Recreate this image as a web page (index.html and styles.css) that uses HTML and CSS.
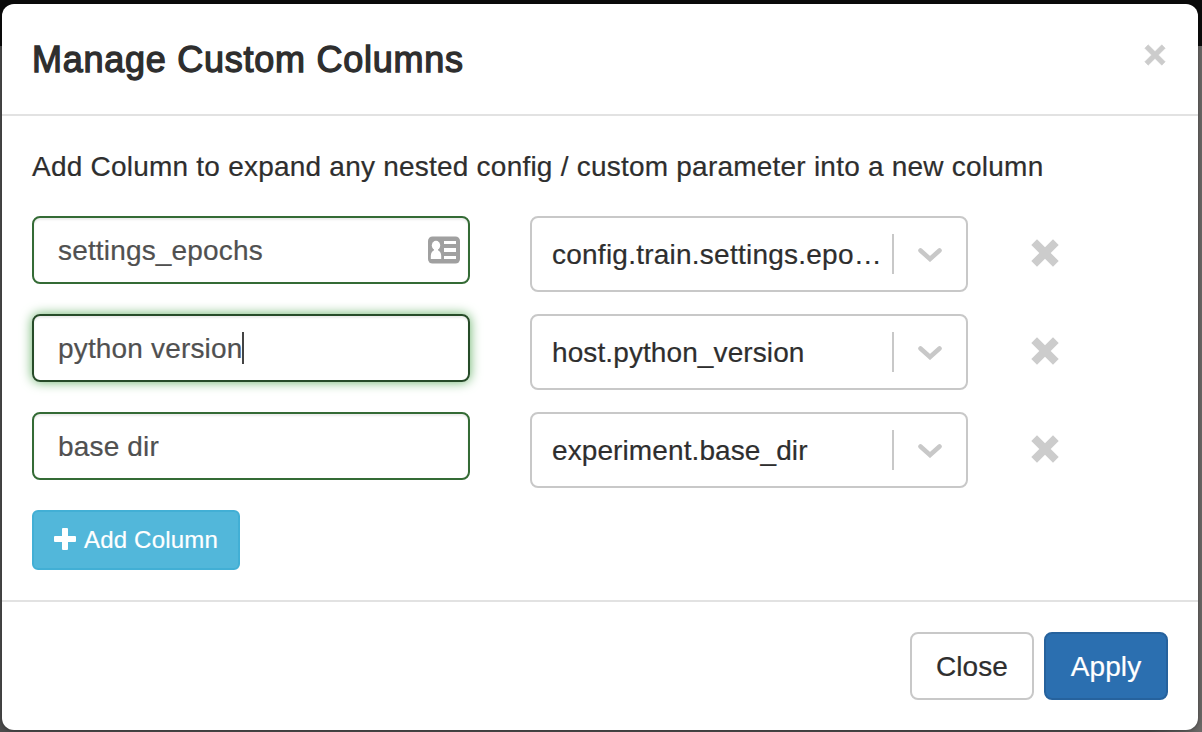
FILE: index.html
```html
<!DOCTYPE html>
<html lang="en">
<head>
<meta charset="utf-8">
<title>Manage Custom Columns</title>
<link rel="stylesheet" href="styles.css">
</head>
<body>
<svg class="symbols" aria-hidden="true">
  <symbol id="remove" viewBox="0 0 28 28"><path d="M6 .3 14 8.3 22 .3 27.700 6 19.700 14 27.700 22 22 27.700 14 19.700 6 27.700.3 22 8.300 14 .3 6Z" fill="#ccc"/></symbol>
  <symbol id="chevron" viewBox="0 0 24 14"><path d="m2.500 2.500 9.500 8.500 9.500-8.500" fill="none" stroke="#c8c8c8" stroke-width="4.600" stroke-linecap="round" stroke-linejoin="miter"/></symbol>
</svg>
<div class="modal">
  <header class="modal-header">
    <h1 class="title">Manage Custom Columns</h1>
    <svg class="dismiss" viewBox="0 0 22 22"><path d="M4.200.8 11 7.600 17.800.8 21.200 4.200 14.400 11 21.200 17.800 17.800 21.200 11 14.400 4.200 21.200.8 17.800 7.600 11 .8 4.200Z" fill="#ccc" stroke="#ccc" stroke-width=".6"/></svg>
  </header>
  <main class="modal-body">
    <p class="hint">Add Column to expand any nested config / custom parameter into a new column</p>
    <div class="row">
      <div class="input"><span class="text">settings_epochs</span>
        <svg class="card" viewBox="0 0 32 28"><rect y=".5" width="32" height="27" rx="4.500" fill="#a0a0a0"/><g fill="#fff"><ellipse cx="8" cy="9.500" rx="4.200" ry="4.700"/><path d="M6 12h4v3H6z"/><path d="M2.800 23v-3c0-3.200 1.700-5.200 4-6h2.400c2.300.8 4 2.800 4 6v3Z"/><path d="M16 5h12v3H16zM16 12h12v4H16zM16 20h12v3H16z"/></g></svg>
      </div>
      <div class="select"><span class="value long">config.train.settings.epo…</span><i class="sep"></i><svg class="arrow"><use href="#chevron"/></svg></div>
      <svg class="remove"><use href="#remove"/></svg>
    </div>
    <div class="row">
      <div class="input focused"><span class="text">python version</span><i class="caret"></i></div>
      <div class="select"><span class="value">host.python_version</span><i class="sep"></i><svg class="arrow"><use href="#chevron"/></svg></div>
      <svg class="remove"><use href="#remove"/></svg>
    </div>
    <div class="row">
      <div class="input"><span class="text">base dir</span></div>
      <div class="select"><span class="value">experiment.base_dir</span><i class="sep"></i><svg class="arrow"><use href="#chevron"/></svg></div>
      <svg class="remove"><use href="#remove"/></svg>
    </div>
    <button class="btn add"><svg class="plus" viewBox="0 0 22 22"><path d="M9 0h4q1 0 1 1v7h7q1 0 1 1v4q0 1-1 1h-7v7q0 1-1 1H9q-1 0-1-1v-7H1q-1 0-1-1V9q0-1 1-1h7V1q0-1 1-1Z" fill="#fff"/></svg><span>Add Column</span></button>
  </main>
  <footer class="modal-footer">
    <button class="btn close">Close</button>
    <button class="btn apply">Apply</button>
  </footer>
</div>
</body>
</html>
```
FILE: styles.css
```css
* { box-sizing: border-box; }
body {
  margin: 0;
  height: 732px;
  padding: 4px 4px 2px 2px;
  overflow: hidden;
  background:
    linear-gradient(#0b0b0b 46px, transparent 46px),
    linear-gradient(90deg, #4c4c4c 1150px, #6a6866 1200px);
  font: 28px/40px "Liberation Sans", Arial, sans-serif;
  color: #2e2e2e;
  -webkit-text-stroke: .2px;
}
.symbols { position: absolute; width: 0; height: 0; }
svg { display: block; flex: none; }
.modal {
  display: flex;
  flex-direction: column;
  height: 726px;
  background: #fff;
  border-radius: 12px;
  box-shadow: 0 0 5px rgba(0, 0, 0, .4);
}
.modal-header {
  display: flex;
  justify-content: space-between;
  height: 112px;
  padding: 30px 32px 0 30px;
  border-bottom: 2px solid #e2e2e2;
}
.title {
  margin: 0;
  font-size: 36px;
  line-height: 52px;
  font-weight: 400;
  letter-spacing: .74px;
  white-space: nowrap;
  -webkit-text-stroke: 1.3px;
}
.dismiss { width: 22px; height: 22px; margin-top: 10px; }
.modal-body { height: 484px; padding: 31px 30px 0; }
.hint { margin: 0 0 29px; letter-spacing: .225px; white-space: nowrap; }
.row { display: flex; height: 76px; margin-bottom: 22px; }
.input {
  display: flex;
  align-items: center;
  justify-content: space-between;
  width: 438px;
  height: 68px;
  padding: 0 8px 0 24px;
  border: 2px solid #346b35;
  border-radius: 8px;
  color: #505050;
  box-shadow: inset 0 2px 2px rgba(0, 0, 0, .075);
}
.focused {
  justify-content: flex-start;
  border-color: #264b28;
  box-shadow: inset 0 2px 2px rgba(0, 0, 0, .075), 0 0 12px #67b168;
}
.text { padding-top: 2px; letter-spacing: .17px; }
.caret { width: 2px; height: 32px; margin-left: -1px; background: #444; }
.card { width: 32px; height: 28px; }
.select {
  display: flex;
  align-items: center;
  width: 438px;
  height: 76px;
  margin-left: 60px;
  border: 2px solid #c8c8c8;
  border-radius: 8px;
}
.value { width: 360px; padding: 2px 0 0 20px; letter-spacing: .1px; white-space: nowrap; }
.long { letter-spacing: .24px; }
.sep { width: 2px; height: 40px; background: #c8c8c8; }
.arrow { width: 24px; height: 14px; margin: 2px 0 0 24px; }
.remove { width: 28px; height: 28px; margin: 23px 0 0 63.400px; }
.btn {
  display: flex;
  align-items: center;
  justify-content: center;
  font: inherit;
  padding: 0;
  border: 2px solid;
  border-radius: 8px;
}
.add {
  width: 208px;
  height: 60px;
  gap: 8px;
  font-size: 24px;
  letter-spacing: .2px;
  color: #fff;
  background: #52b7da;
  border-color: #42afd5;
  border-radius: 6px;
}
.plus { width: 22px; height: 22px; margin-top: -2px; }
.modal-footer {
  display: flex;
  justify-content: flex-end;
  gap: 10px;
  height: 130px;
  padding: 30px;
  border-top: 2px solid #e2e2e2;
}
.close, .apply { width: 124px; height: 68px; padding-top: 2px; letter-spacing: .1px; }
.close { color: #2e2e2e; background: #fff; border-color: #c8c8c8; }
.apply { color: #fff; background: #2b6fb0; border-color: #26629d; }
```
